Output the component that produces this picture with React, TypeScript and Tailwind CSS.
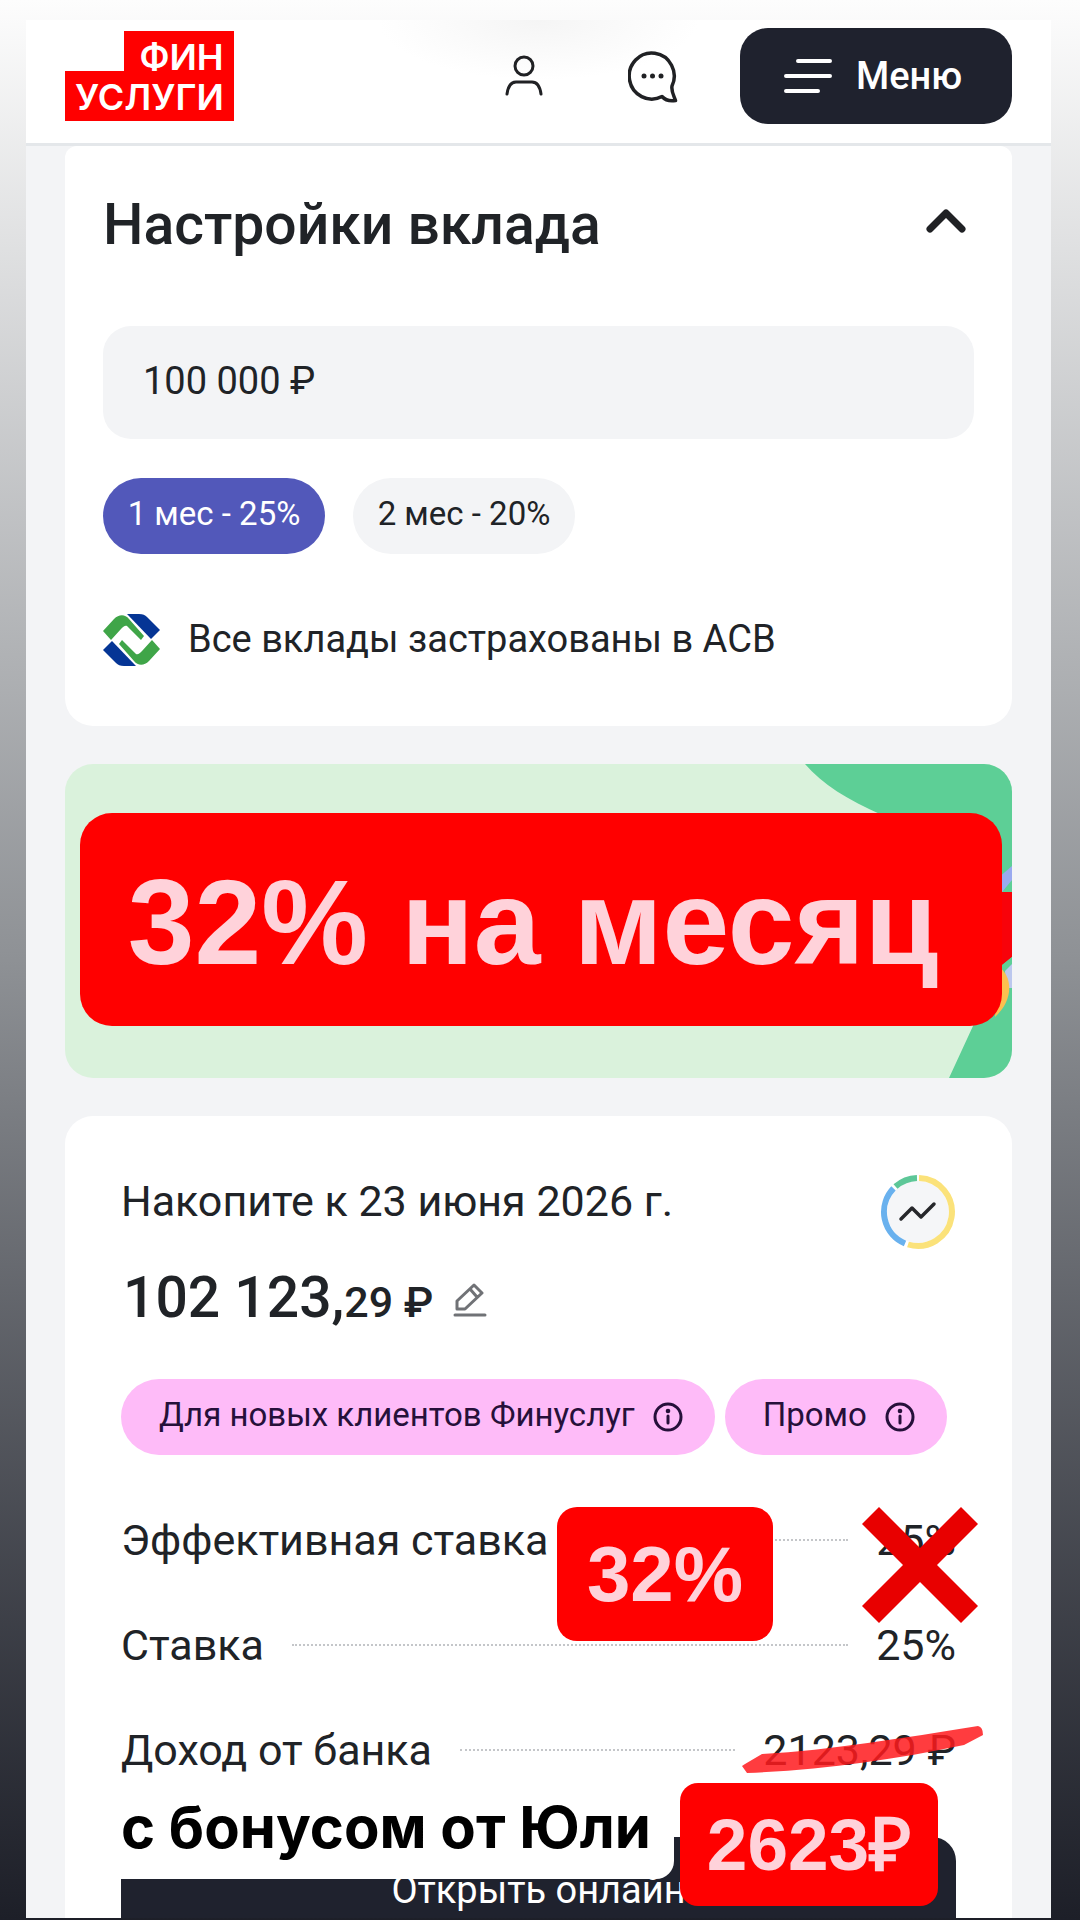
import { useState } from "react";
import type { ReactNode } from "react";

const TERMS = ["1 мес - 25%", "2 мес - 20%"];

function UserIcon() {
  return (
    <svg width="38" height="42" viewBox="0 0 38 42" fill="none" stroke="#202124" strokeWidth="3" strokeLinecap="round">
      <circle cx="19" cy="11" r="9" />
      <path d="M2 39c1-7 4-12 9-12h16c5 0 8 5 9 12" />
    </svg>
  );
}

function ChatIcon() {
  return (
    <svg width="50" height="53" viewBox="0 0 50 53" fill="none" stroke="#202124" strokeWidth="3.500" strokeLinejoin="round">
      <path d="M34 46.500A22.500 23 0 1 1 44 36c-1 5 2 10 3.500 14.500-6 1-10 0-13.500-4z" />
      <g fill="#202124" stroke="none">
        <circle cx="16" cy="26" r="2.500" />
        <circle cx="24.500" cy="26" r="2.500" />
        <circle cx="33" cy="26" r="2.500" />
      </g>
    </svg>
  );
}

function InfoIcon() {
  return (
    <svg width="30" height="30" viewBox="0 0 30 30" fill="none" stroke="#26103a" strokeWidth="3" strokeLinecap="round">
      <circle cx="15" cy="15" r="13" />
      <path d="M15 14v7" />
      <circle cx="15" cy="9" r="2.300" fill="#26103a" stroke="none" />
    </svg>
  );
}

function AsvLogo() {
  return (
    <svg width="57" height="52" viewBox="0 0 57 52">
      <path id="asv-blue" d="M24 0h12c4 0 6 1 8 3l13 13-9 9z" fill="#053595" />
      <path id="asv-green" d="M0 17 11 5c5-5 11-5 15 0l15 17-3 4-14-14c-2-1-4 1-6 3L8 26z" fill="#3fa548" />
      <use href="#asv-blue" transform="rotate(180 28.500 26)" />
      <use href="#asv-green" transform="rotate(180 28.500 26)" />
    </svg>
  );
}

function Logo() {
  return (
    <a href="#" aria-label="Финуслуги" className="flex flex-col items-end font-['Inter'] text-[36px] leading-[28px] font-semibold text-white">
      <span className="h-10 bg-[#ff0000] pt-3 pr-[10px] pl-4">ФИН</span>
      <span className="h-[50px] bg-[#ff0000] px-[10px] pt-3">УСЛУГИ</span>
    </a>
  );
}

function Header() {
  return (
    <header className="flex h-[126px] items-start justify-between border-b-3 border-[#e4e7ea] bg-white bg-[radial-gradient(160px_60px_at_50%_0,#f5f5f5,#fff)] px-[39px] pt-2">
      <div className="pt-[3px]">
        <Logo />
      </div>
      <div className="flex h-24 items-center">
        <button aria-label="Профиль" className="mr-[85px]">
          <UserIcon />
        </button>
        <button aria-label="Чат" className="mr-[62px]">
          <ChatIcon />
        </button>
        <button className="flex h-24 w-[272px] items-center gap-6 rounded-[28px] bg-[#1f222e] pl-11 text-[38px] font-medium text-white">
          <svg width="48" height="36" viewBox="0 0 48 36" stroke="white" strokeWidth="4" strokeLinecap="round">
            <path d="M14 3h32M2 18h44M2 33h32" />
          </svg>
          <span>Меню</span>
        </button>
      </div>
    </header>
  );
}

function Settings() {
  const [amount, setAmount] = useState("100 000 ₽");
  const [term, setTerm] = useState(TERMS[0]);

  return (
    <section className="rounded-t-[12px] rounded-b-[28px] bg-white px-[38px] pt-[39px] pb-[60px]">
      <div className="flex items-center justify-between pr-2">
        <h1 className="text-[57px] leading-[80px] font-medium">Настройки вклада</h1>
        <button aria-label="Свернуть" className="pb-2">
          <svg width="40" height="26" viewBox="0 0 40 26" fill="none" stroke="#202124" strokeWidth="7" strokeLinecap="round" strokeLinejoin="round">
            <path d="M4 21 20 5l16 16" />
          </svg>
        </button>
      </div>
      <input
        aria-label="Сумма вклада"
        value={amount}
        onChange={(e) => setAmount(e.target.value)}
        className="mt-[61px] block h-[113px] w-full rounded-[28px] bg-[#f3f4f6] px-10 pb-1 text-[38px]"
      />
      <div className="mt-[39px] flex gap-7">
        {TERMS.map((t) => (
          <button
            key={t}
            onClick={() => setTerm(t)}
            className={`h-[76px] w-[222px] rounded-full pb-1 text-[33px] ${t === term ? "bg-[#5258ba] text-white" : "bg-[#f3f4f6]"}`}
          >
            {t}
          </button>
        ))}
      </div>
      <div className="mt-[60px] flex items-center gap-7 text-[38px] leading-[50px]">
        <AsvLogo />
        <span className="pb-[2px]">Все вклады застрахованы в АСВ</span>
      </div>
    </section>
  );
}

function Banner() {
  return (
    <section className="relative overflow-hidden rounded-[28px] bg-[#daf2dc] pt-[49px] pr-[10px] pb-[52px] pl-[15px]">
      <svg className="absolute top-0 right-0 h-full w-[210px]" viewBox="0 0 210 314">
        <path d="M3 0C20 20 46 36 80 51c60 80 110 140 91 211L147 314h63V0z" fill="#5dcf96" />
        <path d="M195 115 210 102v14l-15 18z" fill="#9aaaf0" />
        <path d="M190 128h20v65l-15 12z" fill="#f8020a" />
        <path d="M198 203 210 193v6l-9 8z" fill="#5dcf96" />
        <path d="M203 207 210 200v24h-6z" fill="#bcc8ee" />
        <path d="M196 202c15 10 16 34-3 51z" fill="#fdc04f" />
      </svg>
      <p className="relative flex h-[213px] items-center justify-center rounded-[32px] bg-[#ff0000] pt-1 pr-4 font-['Liberation_Sans'] text-[120px] font-bold whitespace-nowrap text-[#ffd2da]">
        32% на месяц
      </p>
    </section>
  );
}

function Tag({ children }: { children: ReactNode }) {
  return (
    <button className="flex h-[76px] items-center gap-[18px] rounded-full bg-[#febbf8] pr-8 pl-[38px] text-[33px] whitespace-nowrap text-[#26103a]">
      <span className="pb-1">{children}</span>
      <InfoIcon />
    </button>
  );
}

function Row({ label, children }: { label: string; children: ReactNode }) {
  return (
    <div className="flex h-[105px] items-center whitespace-nowrap">
      <dt>{label}</dt>
      <span className="mx-7 flex-1 border-t-2 border-dotted border-[#c4c6c9]" />
      <dd className="relative">{children}</dd>
    </div>
  );
}

function Offer() {
  return (
    <section className="relative rounded-t-[28px] bg-white px-14 pt-[58px]">
      <div className="flex items-start justify-between">
        <h2 className="text-[43px] leading-[54px]">Накопите к 23 июня 2026 г.</h2>
        <button aria-label="График">
          <svg width="76" height="76" viewBox="0 0 76 76" fill="none" strokeWidth="6">
            <circle cx="38" cy="38" r="31" fill="#f5f6f8" />
            <path d="M39 4A34 34 0 1 1 28 70.500" stroke="#fbe27a" />
            <path d="M25 69.400A34 34 0 0 1 13.500 14.400" stroke="#69b1ee" />
            <path d="M15.500 12.600A34 34 0 0 1 37 4" stroke="#5dc798" />
            <path d="m21 45 11-11 9 9 13-13" stroke="#26272b" strokeWidth="3.500" strokeLinecap="round" strokeLinejoin="round" />
          </svg>
        </button>
      </div>
      <div className="mt-3 flex items-baseline pl-[2px] font-medium">
        <span className="text-[57px] leading-[72px]">102 123,</span>
        <span className="text-[43px]">29 ₽</span>
        <button aria-label="Изменить" className="ml-5">
          <svg width="34" height="34" viewBox="0 0 34 34" fill="none" stroke="#707276" strokeWidth="3" strokeLinecap="round" strokeLinejoin="round">
            <path d="M2 32h30M4 26v-8L21 2l8 8-17 16zM17 6l7 8" />
          </svg>
        </button>
      </div>
      <div className="mt-[44px] flex gap-[10px]">
        <Tag>Для новых клиентов Финуслуг</Tag>
        <Tag>Промо</Tag>
      </div>
      <dl className="mt-[33px] text-[43px]">
        <Row label="Эффективная ставка">
          25%
          <svg className="absolute -top-px -right-[22px]" width="116" height="116" viewBox="0 0 116 116">
            <path d="M17 0 58 41 99 0l17 17-41 41 41 41-17 17-41-41-41 41L0 99l41-41L0 17z" fill="#e80000" />
          </svg>
        </Row>
        <Row label="Ставка">25%</Row>
        <Row label="Доход от банка">
          2123,29 ₽
          <svg className="absolute top-2 -right-7" width="242" height="48" viewBox="0 0 242 48">
            <path d="M3 38 20 28C90 24 160 12 236 0q5 1 5 9l-19 10C150 34 80 44 5 47l-5-7z" fill="#ff1a1d" fillOpacity="0.85" />
          </svg>
        </Row>
      </dl>
      <div className="absolute top-[391px] left-[492px] flex h-[134px] w-[216px] items-center justify-center rounded-[20px] bg-[#ff0000] font-['Liberation_Sans'] text-[78px] font-bold text-[#ffd2da]">
        32%
      </div>
      <button className="mt-[34px] block h-[81px] w-full rounded-t-[24px] bg-[#1f222e] pt-[26px] text-[38px] leading-[48px] text-white">
        Открыть онлайн
      </button>
      <p className="absolute top-[675px] left-6 w-[585px] rounded-br-[18px] bg-white pb-4 pl-8 font-['Inter'] text-[58px] leading-[72px] font-bold whitespace-nowrap text-black">
        с бонусом от Юли
      </p>
      <div className="absolute top-[667px] left-[615px] flex h-[123px] w-[258px] items-center justify-center rounded-[18px] bg-[#ff0000] font-['Liberation_Sans'] text-[73px] font-bold text-[#ffd2da]">
        2623₽
      </div>
    </section>
  );
}

export default function App() {
  return (
    <div className="min-h-screen bg-linear-to-b from-[#fdfdfd] via-[#8e9195] via-50% to-[#1d1f28] pt-5 pr-[29px] pl-[26px] font-['Roboto',sans-serif] text-[#202327]">
      <main className="flex flex-col bg-[#f3f4f6]">
        <Header />
        <div className="flex flex-col gap-[38px] px-[39px]">
          <Settings />
          <Banner />
          <Offer />
        </div>
      </main>
    </div>
  );
}
